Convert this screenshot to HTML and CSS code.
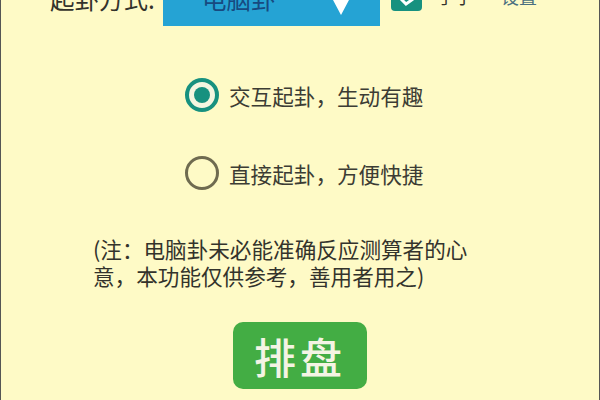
FILE: index.html
```html
<!DOCTYPE html>
<html lang="zh">
<head>
  <meta charset="UTF-8" />
  <title>起卦</title>
  <link rel="stylesheet" href="styles.css">
</head>
<body>
  <div class="screen">
    <!-- top row, cut off by the window -->
    <div class="top-row">
      <span class="top-label">起卦方式:</span>
      <div class="select">
        <span class="select-text">电脑卦</span>
        <svg class="select-arrow" width="18" height="16" viewBox="0 0 18 16"><path d="M1 0H17L9 15Z" fill="#fff"/></svg>
      </div>
      <span class="check">
        <svg width="31" height="12" viewBox="0 0 31 12"><path d="M10 0L15 5L22 0" fill="none" stroke="#fff" stroke-width="3"/></svg>
      </span>
      <span class="check-label">手子</span>
      <span class="link">设置</span>
    </div>

    <div class="options">
      <div class="option">
        <span class="radio radio-on"><span class="radio-dot"></span></span>
        <span>交互起卦，生动有趣</span>
      </div>
      <div class="option">
        <span class="radio"></span>
        <span>直接起卦，方便快捷</span>
      </div>
    </div>

    <p class="note">(注：电脑卦未必能准确反应测算者的心<br>意，本功能仅供参考，善用者用之)</p>

    <div class="btn-wrap">
      <div class="btn">排盘</div>
    </div>
  </div>
</body>
</html>
```

FILE: styles.css
```css
* {
  box-sizing: border-box;
}

body {
  margin: 0;
  font-family: "Noto Sans CJK SC", "Liberation Sans", sans-serif;
  background: #fefac6;
}

.screen {
  width: 600px;
  height: 400px;
  overflow: hidden;
  background: #fefac6;
  border-left: 1px solid #555;
  border-right: 1px solid #555;
}

.top-row {
  display: flex;
  align-items: flex-end;
  height: 26px;
  padding-left: 49px;
  color: #33332c;
}

.top-label {
  width: 113px;
  margin-bottom: 12px;
  font-size: 24.5px;
  line-height: 30px;
  white-space: nowrap;
}

.select {
  position: relative;
  width: 217px;
  height: 26px;
  background: #25a3d4;
}

.select-text {
  position: absolute;
  left: 39px;
  bottom: 12px;
  font-size: 24.5px;
  line-height: 30px;
  color: #174a80;
}

.select-arrow {
  position: absolute;
  left: 169px;
  bottom: 10px;
}

.check {
  width: 31px;
  height: 12px;
  margin: 0 0 15px 11px;
  background: #17917f;
  border-radius: 0 0 4px 4px;
  overflow: hidden;
}

.check svg {
  display: block;
}

.check-label {
  width: 64px;
  margin: 0 0 20px 15px;
  font-size: 18px;
  line-height: 20px;
}

.link {
  margin-bottom: 20px;
  font-size: 18px;
  line-height: 20px;
  color: #4a6f80;
}

.options {
  display: flex;
  flex-direction: column;
  gap: 44px;
  margin-top: 52px;
  padding-left: 184px;
}

.option {
  display: flex;
  align-items: center;
  gap: 10px;
  height: 34px;
  font-size: 21.6px;
  color: #3c3c34;
}

.radio {
  display: flex;
  align-items: center;
  justify-content: center;
  width: 34px;
  height: 34px;
  border: 3px solid #6f6b50;
  border-radius: 50%;
}

.radio-on {
  border: 4px solid #17917f;
  background: #f4f6e0;
}

.radio-dot {
  width: 16px;
  height: 16px;
  background: #17917f;
  border-radius: 50%;
}

.note {
  margin: 45px 0 0;
  padding-left: 92px;
  font-size: 21.6px;
  line-height: 27px;
  color: #33332c;
}

.btn-wrap {
  display: flex;
  justify-content: center;
  margin-top: 33px;
}

.btn {
  width: 134px;
  height: 67px;
  background: #43ad44;
  border-radius: 10px;
  color: #f4f4e4;
  font-size: 42px;
  font-weight: 500;
  line-height: 67px;
  text-align: center;
  letter-spacing: 4px;
}
```
